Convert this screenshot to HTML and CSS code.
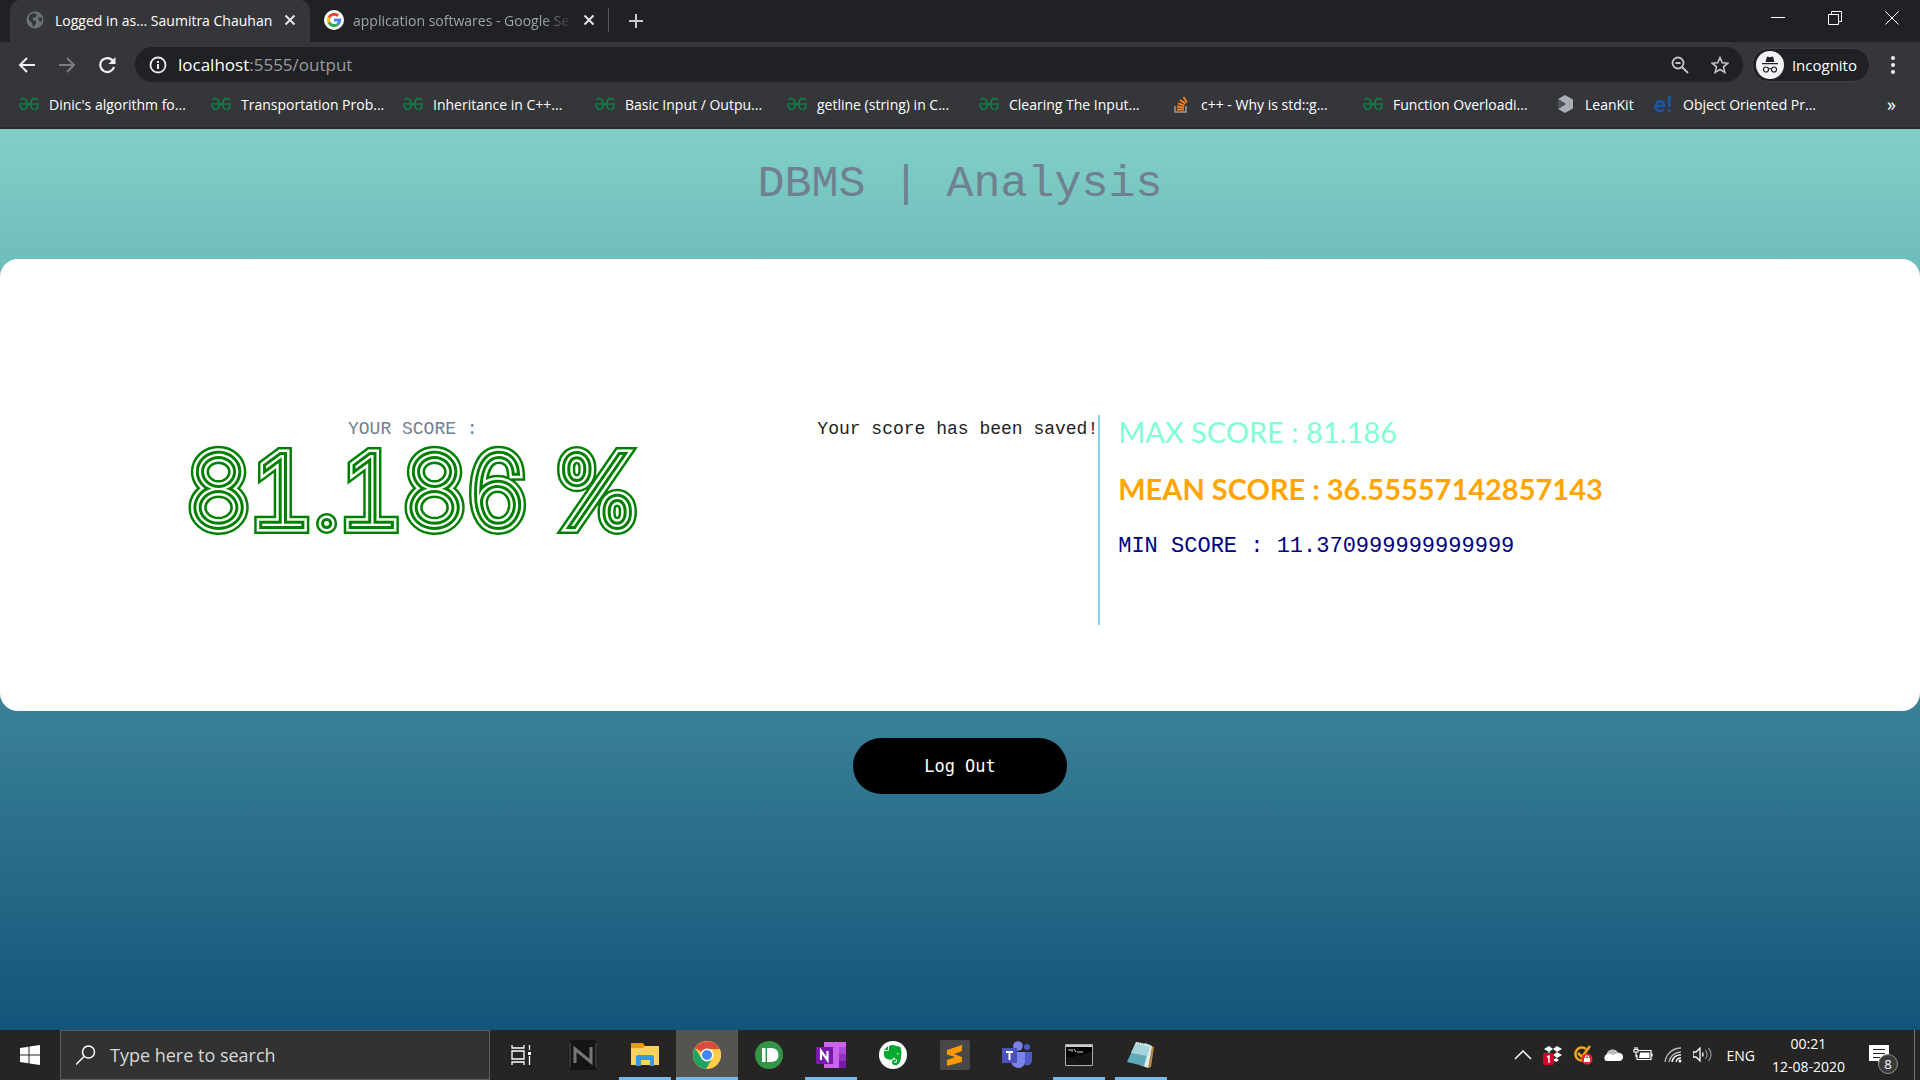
FILE: index.html
```html
<!DOCTYPE html>
<html lang="en">
<head>
<meta charset="utf-8">
<title>DBMS | Analysis</title>
<link rel="stylesheet" href="styles.css">
</head>
<body>
<svg class="sprite" aria-hidden="true">
  <symbol id="x" viewBox="0 0 12 12"><path d="M1.500 1.500l9 9M10.500 1.500l-9 9" stroke="currentColor" stroke-width="2" fill="none"/></symbol>
  <symbol id="gg" viewBox="0 0 20 16"><path d="M1 4Q4 1 7 4Q9 7 8 11Q5 15 2 12L1 9M0 8H20M19 4Q15 1 12.500 4Q10.500 8 12.500 12Q15 15 18.500 12V8" fill="none" stroke="#127a42" stroke-width="1.700"/></symbol>
</svg>
<div class="screen">
  <header class="browser">
    <div class="tabs">
      <div class="tab tab-active">
        <svg class="i18" viewBox="0 0 18 18"><circle cx="9" cy="9" r="8.500" fill="#6f7277"/><path d="M3 5l4-3 4 1-1 3-3 1v2l3 1v3l-3 3-1-4-3-3zM12 6l4 1v4l-3-1z" fill="#35363a"/></svg>
        <span class="tab-title">Logged in as... Saumitra Chauhan</span>
        <button class="icon-btn" aria-label="Close tab"><svg class="i12"><use href="#x"/></svg></button>
      </div>
      <div class="tab">
        <svg class="i20" viewBox="0 0 20 20"><circle cx="10" cy="10" r="10" fill="#fff"/><g fill="none" stroke-width="3"><path d="M5 7.500A5.700 5.700 0 0 1 14 5.800" stroke="#ea4335"/><path d="M5 12.600A5.700 5.700 0 0 1 5 7.400" stroke="#fbbc05"/><path d="M14 14A5.700 5.700 0 0 1 4.900 12.400" stroke="#34a853"/><path d="M10 10h5.700q0 2.500-1.800 4.100" stroke="#4285f4"/></g></svg>
        <span class="tab-title faded">application softwares - Google Se</span>
        <button class="icon-btn" aria-label="Close tab"><svg class="i12"><use href="#x"/></svg></button>
      </div>
      <button class="icon-btn new-tab" aria-label="New tab"><svg class="i16" viewBox="0 0 16 16"><path d="M8 1v14M1 8h14" stroke="currentColor" stroke-width="2"/></svg></button>
      <div class="window-controls">
        <button class="icon-btn" aria-label="Minimize"><svg class="i14" viewBox="0 0 14 14"><path d="M0 6.500h14" stroke="#fff"/></svg></button>
        <button class="icon-btn" aria-label="Restore"><svg class="i14" viewBox="0 0 14 14"><path d="M.500 3.500h10v10h-10zM3.500 3V.500h10v10H11" stroke="#fff" fill="none"/></svg></button>
        <button class="icon-btn" aria-label="Close"><svg class="i14" viewBox="0 0 14 14"><path d="M.500.500l13 13M13.500.500l-13 13" stroke="#fff" fill="none"/></svg></button>
      </div>
    </div>
    <div class="toolbar">
      <button class="icon-btn nav" aria-label="Back"><svg class="i18" viewBox="0 0 18 18"><path d="M17 9H2M9 2L2 9l7 7" stroke="#f1f1f2" stroke-width="2" fill="none"/></svg></button>
      <button class="icon-btn nav" aria-label="Forward"><svg class="i18" viewBox="0 0 18 18"><path d="M1 9h15M9 2l7 7-7 7" stroke="#7d7e81" stroke-width="2" fill="none"/></svg></button>
      <button class="icon-btn nav" aria-label="Reload"><svg class="i18" viewBox="0 0 18 18"><path d="M15 5A7 7 0 1 0 16 11" stroke="#f1f1f2" stroke-width="2.200" fill="none"/><path d="M17.500 1v7h-7z" fill="#f1f1f2"/></svg></button>
      <div class="omnibox">
        <svg class="i18" viewBox="0 0 18 18"><circle cx="9" cy="9" r="7.500" fill="none" stroke="#e8eaed" stroke-width="1.800"/><path d="M9 8v5M9 5v2" stroke="#e8eaed" stroke-width="2"/></svg>
        <span class="url">localhost<span class="url-rest">:5555/output</span></span>
        <button class="icon-btn" aria-label="Zoom"><svg class="i18" viewBox="0 0 18 18"><circle cx="7" cy="7" r="5.500" fill="none" stroke="#c4c5c7" stroke-width="1.800"/><path d="M4.500 7h5M11 11l6 6" stroke="#c4c5c7" stroke-width="1.800"/></svg></button>
        <button class="icon-btn" aria-label="Bookmark"><svg class="i18" viewBox="0 0 18 18"><path d="M9 1.500l2.200 5.200 5.600.5-4.300 3.700 1.300 5.500L9 13.500l-4.800 2.900 1.300-5.500L1.200 7.200l5.600-.5z" fill="none" stroke="#c4c5c7" stroke-width="1.600"/></svg></button>
      </div>
      <button class="profile"><svg class="i28" viewBox="0 0 28 28"><circle cx="14" cy="14" r="14" fill="#f1f3f4"/><path d="M9.500 11L11 5.500l3 .8 3-.8 1.500 5.500zM6 12h16v1.300H6z" fill="#202124"/><path d="M12.500 18q1.500-1 3 0" stroke="#202124" fill="none" stroke-width="1.200"/><g fill="none" stroke="#202124" stroke-width="1.200"><circle cx="10" cy="18.500" r="2.500"/><circle cx="18" cy="18.500" r="2.500"/></g></svg>Incognito</button>
      <button class="icon-btn menu" aria-label="Menu"><svg class="i18" viewBox="0 0 18 18" fill="#f1f1f2"><circle cx="9" cy="2" r="2"/><circle cx="9" cy="9" r="2"/><circle cx="9" cy="16" r="2"/></svg></button>
    </div>
    <nav class="bookmarks">
      <a href="#"><svg class="fav"><use href="#gg"/></svg>Dinic's algorithm fo...</a>
      <a href="#"><svg class="fav"><use href="#gg"/></svg>Transportation Prob...</a>
      <a href="#"><svg class="fav"><use href="#gg"/></svg>Inheritance in C++...</a>
      <a href="#"><svg class="fav"><use href="#gg"/></svg>Basic Input / Outpu...</a>
      <a href="#"><svg class="fav"><use href="#gg"/></svg>getline (string) in C...</a>
      <a href="#"><svg class="fav"><use href="#gg"/></svg>Clearing The Input...</a>
      <a href="#"><svg class="fav" viewBox="0 0 20 18"><path d="M4 11v6h11v-6" fill="none" stroke="#9a9c9f" stroke-width="1.500"/><path d="M6 14.500h7M6 11.500l7 .8M7 8.300l6.500 2.200M9 5l5.500 3.800M12.500 2l3.500 5.500" stroke="#f48024" stroke-width="1.800"/></svg>c++ - Why is std::g...</a>
      <a href="#"><svg class="fav"><use href="#gg"/></svg>Function Overloadi...</a>
      <a class="short" href="#"><svg class="fav" viewBox="0 0 20 18"><path d="M10 0l8 4.500v9L10 18l-7-4 8-5-8-5z" fill="#a9acb2"/><path d="M3 4v10l8-5z" fill="#4d5260"/></svg>LeanKit</a>
      <a href="#"><svg class="fav" viewBox="0 0 20 20"><path d="M3 12h8q0-5-4-5t-5 5.500 5 5.500q2.500 0 4-1.500M17 1v12M17 16v3" fill="none" stroke="#1b55a5" stroke-width="3"/></svg>Object Oriented Pr...</a>
      <button class="icon-btn more" aria-label="More bookmarks">»</button>
    </nav>
  </header>

  <main class="page">
    <h1>DBMS | Analysis</h1>
    <section class="card">
      <div class="score">
        <p class="label">YOUR SCORE :</p>
        <p class="value" data-score="81.186 %">81.186 %</p>
      </div>
      <p class="saved">Your score has been saved!</p>
      <div class="stats">
        <p class="max">MAX SCORE : 81.186</p>
        <p class="mean">MEAN SCORE : 36.55557142857143</p>
        <p class="min">MIN SCORE : 11.370999999999999</p>
      </div>
    </section>
    <button class="logout">Log Out</button>
  </main>

  <footer class="taskbar">
    <button class="start" aria-label="Start"><svg class="i20" viewBox="0 0 20 20" fill="#fff"><path d="M0 3l8.500-1.200v7.700H0zM9.500 1.600L20 0v9.500H9.500zM0 10.500h8.500v7.700L0 17zM9.500 10.500H20V20L9.500 18.400z"/></svg></button>
    <label class="search"><svg class="i20" viewBox="0 0 20 20"><circle cx="12.500" cy="7" r="6" fill="none" stroke="#fff" stroke-width="1.500"/><path d="M8 11.500L0 19.500" stroke="#fff" stroke-width="1.500"/></svg><input type="text" placeholder="Type here to search" aria-label="Type here to search"></label>
    <div class="apps">
      <button aria-label="Task View"><svg class="i20" viewBox="0 0 20 20" fill="none" stroke="#fff" stroke-width="1.300"><path d="M1 0v3h12V0M1 6h12v8H1zM1 20v-3h12v3M18.500 0v5M18.500 11v9"/><path d="M17 7h3v3h-3z" fill="#fff" stroke="none"/></svg></button>
      <button aria-label="N"><svg class="i30" viewBox="0 0 30 30"><path d="M2 0h26l2 15-2 15H2L0 15z" fill="#151515"/><path d="M2 3v24M28 3v24" stroke="#353535" stroke-width="2"/><path d="M7 23V9l16 13V7" stroke="#777" stroke-width="3" fill="none"/></svg></button>
      <button class="open" aria-label="File Explorer"><svg class="i28" viewBox="0 0 28 28"><path d="M0 2h12l2 3v2H0z" fill="#e19f00"/><path d="M0 7h12l2-2h14v19H0z" fill="#ffd35a"/><path d="M5 25V16q0-2 2-2h14q2 0 2 2v9h-4v-6h-9v6z" fill="#3a96dd"/></svg></button>
      <button class="open current" aria-label="Chrome"><svg class="i28" viewBox="0 0 28 28"><circle cx="14" cy="14" r="14" fill="#ffcd46"/><path d="M14 14L2 7A14 14 0 0 1 26.500 8H14z" fill="#dc4c3e"/><path d="M2 7A14 14 0 0 0 13 28l6-10H9z" fill="#1da462"/><path d="M14 8h12.500q3 6 0 12T13 28l7-11z" fill="#ffcd46"/><circle cx="14" cy="14" r="6.500" fill="#fff"/><circle cx="14" cy="14" r="5" fill="#4285f4"/></svg></button>
      <button aria-label="Pushbullet"><svg class="i28" viewBox="0 0 28 28"><circle cx="14" cy="14" r="14" fill="#339547"/><path d="M7 7h3.500v14H7zM12 7h5q6.500 1 6.500 7T17 21h-5z" fill="#fff"/></svg></button>
      <button class="open" aria-label="OneNote"><svg class="i30" viewBox="0 0 30 30"><path d="M8 2h22v26H8z" fill="#ca64ea"/><path d="M23 7h7v7h-7z" fill="#ae4bd5"/><path d="M23 14h7v7h-7z" fill="#9332bf"/><path d="M23 21h7v7h-7z" fill="#7719aa"/><path d="M0 7h17v17H0z" fill="#7719aa"/><path d="M5 20v-9l6.500 9v-9" stroke="#fff" stroke-width="2.200" fill="none"/></svg></button>
      <button aria-label="Evernote"><svg class="i28" viewBox="0 0 28 28"><circle cx="14" cy="14" r="14" fill="#fff"/><path d="M5 10h4l1-1V5q4-2 7 0 5 0 5 3 1 4 0 9-1 6-4 7-5 1-5-3 0-3 4-2.500v2q-2-.5-2 .5t2 .8q1-.5 1-3-2-1-3-2.500-1 2.500-4 2.500-5-.5-6-4-.5-2 0-3.800zM5 9l4-4v4z" fill="#00a82d"/><path d="M17.500 13q1.500-2 2.500.5z" fill="#fff"/></svg></button>
      <button aria-label="Sublime Text"><svg class="i30" viewBox="0 0 30 30"><rect width="30" height="30" rx="2" fill="#484848"/><path d="M22 5v6l-8 3 8 3v5L7 26v-6l8-3-8-2.500V10z" fill="#ff9800"/></svg></button>
      <button aria-label="Teams"><svg class="i30" viewBox="0 0 30 30"><circle cx="16" cy="6" r="4.800" fill="#7b83eb"/><circle cx="25" cy="7" r="3" fill="#5059c9"/><path d="M20 12h10v9q-2 6-7 4z" fill="#5059c9"/><path d="M9 12h14v10q-1 6-7 6-6-1-7-6z" fill="#7b83eb"/><path d="M0 8h15v15H0z" fill="#4b53bc"/><path d="M4 12h7M7.500 12v8" stroke="#fff" stroke-width="2"/></svg></button>
      <button class="open" aria-label="Command Prompt"><svg class="i28" viewBox="0 0 28 28"><path d="M.500 3.500h27v21H.500z" fill="#000" stroke="#a9acb0"/><path d="M1 4h26v2H1z" fill="#ccc"/><path d="M3 9h3M7 8v3M9 8l2 3M12 11h6" stroke="#ddd"/><path d="M1 16q14 0 26-6v14H1z" fill="#151515"/></svg></button>
      <button class="open" aria-label="Notepad"><svg class="i28" viewBox="0 0 28 28"><path d="M20 3l7 3-3 20-3 1z" fill="#b58a45"/><path d="M18 2l7 3-4 22-8-3z" fill="#dfe9eb"/><path d="M9 1l14 3-6 21L0 21z" fill="#5fa9b8"/><path d="M9 1l14 3-3 11L4 12z" fill="#a5d3da"/><path d="M9 2l14 3" stroke="#eee" stroke-width="2" stroke-dasharray="1 1"/></svg></button>
    </div>
    <div class="tray">
      <svg class="i20" viewBox="0 0 20 20"><path d="M2 14l8-8 8 8" fill="none" stroke="#fff" stroke-width="1.500"/></svg>
      <svg class="i20" viewBox="0 0 20 20"><path d="M1 4l5-3 4 3-4 3zM10 4l4-3 5 3-5 3zM1 10l5-3 4 3-4 3zM10 10l4-3 5 3-5 3zM10 15l3-2 3 2-3 2z" fill="#fff"/><rect y="8" width="11" height="12" rx="2" fill="#d6002a"/><path d="M4 12l2-1v7" stroke="#fff" stroke-width="1.500" fill="none"/></svg>
      <svg class="i20" viewBox="0 0 20 20"><path d="M13 4a6.500 6.500 0 1 0 1 9M5 8l4 4 8-11" fill="none" stroke="#f5a81c" stroke-width="2.500"/><circle cx="14" cy="14" r="5.500" fill="#e02b2b"/><path d="M11 13h6v4h-6z" fill="#fff"/><path d="M12.500 13v-2h3v2" fill="none" stroke="#fff"/></svg>
      <svg class="i20" viewBox="0 0 20 20"><path d="M3 16a4 4 0 0 1 1-7 6 6 0 0 1 11-1 4 4 0 0 1 2 8z" fill="#fff"/><path d="M4 8a6 6 0 0 1 11 0l-5 2z" fill="#bbb"/></svg>
      <svg class="i20" viewBox="0 0 20 20"><path d="M6 5.500h12v9H4V10M19 8.500v3M1 4.500v2.500h4V4.500zM2 4V2M4 4V2M3 7v5" fill="none" stroke="#fff" stroke-width="1.200"/><path d="M7 7.500h9.500v5.500H6z" fill="#fff"/></svg>
      <svg class="i20" viewBox="0 0 20 20" fill="none" stroke-width="1.300"><path d="M2 17A16 16 0 0 1 18 3M6 17A12 12 0 0 1 18 7" stroke="#bbb"/><path d="M9 17a8 8 0 0 1 9-7M13 17a5 5 0 0 1 5-4" stroke="#fff"/><circle cx="17" cy="16" r="1.500" fill="#fff"/></svg>
      <svg class="i20" viewBox="0 0 20 20" fill="none" stroke="#fff" stroke-width="1.300"><path d="M0 7h3l4-4v13l-4-4H0zM9.500 7.500q1 2 0 4"/><path d="M12.500 5q3 4.500 0 9M15.500 3q5 6.500 0 13" stroke="#888"/></svg>
      <span class="lang">ENG</span>
      <time class="clock">00:21<br>12-08-2020</time>
      <button class="notify" aria-label="Notifications"><svg class="i20" viewBox="0 0 20 20"><path d="M0 0h20v16H12l-3 4v-4H0z" fill="#fff"/><path d="M4 4.500h12M4 8.500h12M4 12.500h7" stroke="#252525"/></svg><span class="badge">8</span></button>
    </div>
  </footer>
</div>
</body>
</html>
```
FILE: styles.css
```css
* { box-sizing: border-box; }
body { margin: 0; font-family: "Open Sans", "Noto Sans", sans-serif; color: #fff; }
button { font: inherit; color: inherit; background: none; border: 0; padding: 0; }
p, h1 { margin: 0; font-weight: 400; }
svg { display: block; flex: none; }
.sprite { position: absolute; width: 0; height: 0; }
.i12 { width: 12px; height: 12px; }
.i14 { width: 14px; height: 14px; }
.i16 { width: 16px; height: 16px; }
.i18 { width: 18px; height: 18px; }
.i20 { width: 20px; height: 20px; }
.i28 { width: 28px; height: 28px; }
.i30 { width: 30px; height: 30px; }
.icon-btn { display: flex; align-items: center; justify-content: center; flex: none; }

.screen { min-height: 100vh; display: flex; flex-direction: column; }

/* Browser chrome */
.browser { background: #35363a; border-bottom: 2px solid #29292c; }
.tabs { display: flex; height: 42px; background: #202124; padding-left: 10px; }
.tab { display: flex; align-items: center; width: 300px; padding: 0 14px 2px 16px; gap: 11px; font-size: 14px; color: #9fa3a8; }
.tab + .tab { width: 304px; gap: 9px; padding: 0 5px 2px 14px; }
.tab + .tab::after { content: ""; width: 1px; height: 24px; margin-left: 4px; background: #55575b; }
.tab-active { background: #35363a; color: #fff; border-radius: 10px 10px 0 0; }
.tab-title { flex: 1; overflow: hidden; white-space: nowrap; }
.faded { -webkit-mask-image: linear-gradient(to right, #000 85%, transparent); mask-image: linear-gradient(to right, #000 85%, transparent); }
.tab .icon-btn { color: #e3e4e6; }
.new-tab { width: 44px; color: #c8cacd; }
.window-controls { display: flex; margin-left: auto; }
.window-controls .icon-btn { width: 57px; height: 36px; }

.toolbar { display: flex; align-items: center; height: 45px; padding: 0 10px 0 7px; }
.nav { width: 40px; height: 36px; }
.omnibox { flex: 1; display: flex; align-items: center; gap: 22px; height: 35px; margin-left: 8px; padding: 0 14px; border-radius: 18px; background: #202124; }
.url { flex: 1; margin-left: -11px; font-size: 17px; line-height: 24px; }
.url-rest { color: #9a9b9e; }
.profile { display: flex; align-items: center; gap: 8px; height: 34px; margin-left: 9px; padding: 0 12px 0 3px; border: 1px solid #404145; border-radius: 17px; background: #202124; font-size: 15px; }
.menu { width: 34px; height: 34px; margin-left: 6px; }

.bookmarks { display: flex; align-items: center; height: 40px; padding: 0 24px 6px 19px; }
.bookmarks a { display: flex; align-items: center; flex: 0 1 192px; gap: 10px; color: #fff; font-size: 14px; white-space: nowrap; text-decoration: none; }
.bookmarks .short { flex-basis: 98px; }
.fav { width: 20px; height: 18px; }
.more { margin-left: auto; font-size: 18px; }

/* Result page */
.page { flex: 1; display: flex; flex-direction: column; align-items: center; background: linear-gradient(#80d0c7, #13547a); font-family: "Liberation Mono", monospace; }
h1 { padding: 31px 0 49px; font-size: 45px; line-height: 50px; color: slategray; }
.card { width: 100%; min-height: 452px; display: grid; grid-template-columns: 43% 14.200% 1fr; padding: 156px 0 86px; border-radius: 18px; background: #fff; color: #222; font-size: 18px; line-height: 28px; }
.score { text-align: center; }
.label { color: slategray; }
.saved { justify-self: end; white-space: nowrap; }

/* Concentric outlines: each layer lies on the wider one below it */
.value { position: relative; display: inline-block; font: 100 98px/96px Inter, sans-serif; font-variant-numeric: tabular-nums; white-space: nowrap; color: #fff; -webkit-text-stroke: 16px green; paint-order: stroke fill; }
.value::before, .value::after { content: attr(data-score); position: absolute; inset: 0; }
.value::before { -webkit-text-stroke: 11px #fff; }
.value::after { -webkit-text-stroke: 6px green; }

.stats { border-left: 2px solid skyblue; padding-left: 18px; white-space: nowrap; }
.max { font: 29px/34px Lato, sans-serif; color: aquamarine; }
.mean { margin-top: 22px; font: 700 29px/36px Lato, sans-serif; color: orange; }
.min { margin-top: 22px; font-size: 22px; line-height: 36px; color: navy; }
.logout { width: 214px; height: 56px; margin-top: 27px; border-radius: 28px; background: #000; font: 17px "DejaVu Sans Mono", monospace; }

/* Desktop taskbar */
.taskbar { display: flex; height: 50px; background: #262523; }
.start { width: 60px; display: flex; align-items: center; justify-content: center; }
.search { display: flex; align-items: center; gap: 14px; width: 430px; padding: 0 15px; border: 1px solid #5d5d5d; background: #323232; }
.search input { flex: 1; border: 0; padding: 0; background: none; font: 18px "Open Sans", sans-serif; outline: 0; }
.search input::placeholder { color: #d8d8d8; }
.apps { display: flex; }
.apps button { display: flex; align-items: center; justify-content: center; width: 62px; border: solid transparent; border-width: 0 5px; }
.apps .open { background: linear-gradient(#76b9ed, #76b9ed) bottom / 100% 3px no-repeat padding-box; }
.apps .current { border: 0; background: linear-gradient(#76b9ed, #76b9ed) bottom / 100% 3px no-repeat, #555451; }
.tray { display: flex; align-items: center; gap: 10px; margin-left: auto; padding-right: 5px; }
.lang { margin-left: 3px; font-size: 14px; }
.clock { margin-left: 7px; font-size: 14px; line-height: 23px; text-align: center; }
.notify { position: relative; margin-left: 14px; padding-right: 25px; height: 100%; border-right: 1px solid #777; display: flex; align-items: center; }
.badge { position: absolute; left: 9px; top: 24px; width: 20px; height: 20px; border: 1px solid #8d8d8d; border-radius: 50%; background: #3b3b3b; font-size: 13px; line-height: 18px; text-align: center; }
```
